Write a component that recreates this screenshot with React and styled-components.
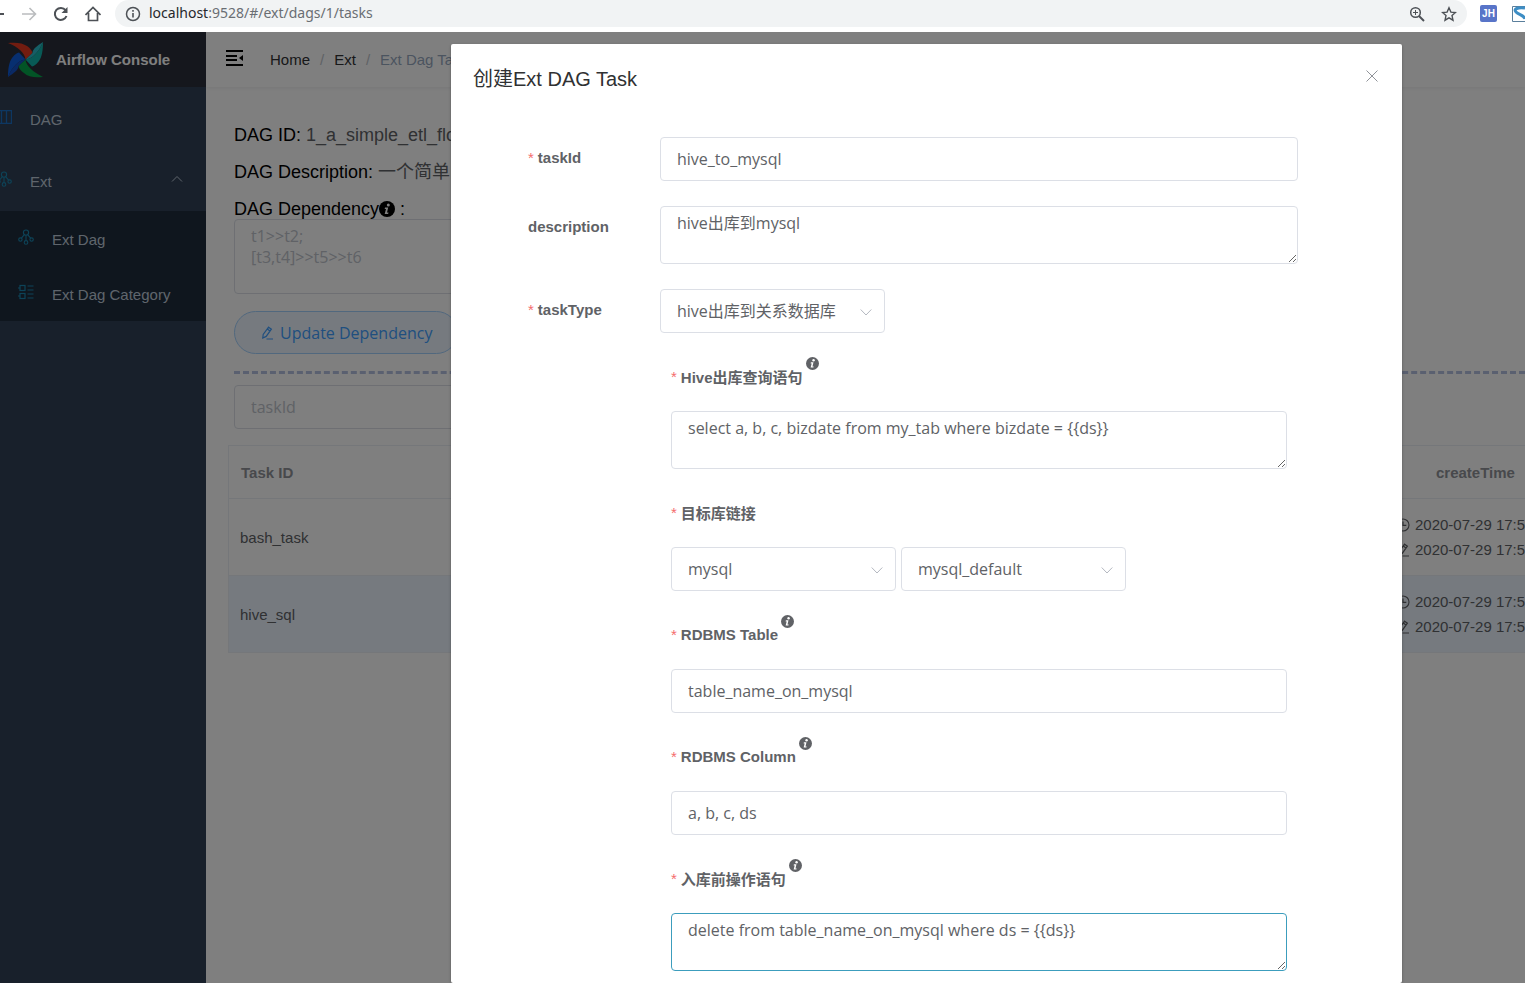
import React from "react";
import styled, { createGlobalStyle, css } from "styled-components";

const ui = `"Liberation Sans", "Noto Sans CJK SC", sans-serif`;
const field = `"Open Sans", "Noto Sans CJK SC", sans-serif`;

const GlobalStyle = createGlobalStyle`
  *, *::before, *::after { box-sizing: border-box; }
  body { margin: 0; font-family: ${ui}; font-size: 15px; color: #606266; }
  button, input, select, textarea { font: inherit; color: inherit; }
  a { color: inherit; text-decoration: none; }
`;

const Page = styled.div`
  display: flex;
  flex-direction: column;
  height: 100vh;
  overflow: hidden;
  background: #fff;
`;

/* browser toolbar */
const Toolbar = styled.div`
  display: flex;
  align-items: center;
  height: 32px;
  padding-bottom: 5px;
  flex: none;
  overflow: hidden;
`;
const IconButton = styled.button`
  display: flex;
  align-items: center;
  justify-content: center;
  width: 32px;
  height: 27px;
  padding: 0;
  border: 0;
  background: none;
  color: #4d5156;
  flex: none;
`;
const NavButtons = styled.div`
  display: flex;
  margin-left: -19px;
  margin-right: 6px;
`;
const Address = styled.div`
  flex: 1;
  display: flex;
  align-items: center;
  height: 27px;
  padding: 0 2px 0 10px;
  gap: 8px;
  background: #f1f3f4;
  border-radius: 14px;
  color: #4d5156;
`;
const Url = styled.div`
  flex: 1;
  padding-bottom: 2px;
  font: 14px/20px "Noto Sans", sans-serif;
  color: #6a6e73;
  span { color: #26282b; }
`;
const AddressActions = styled.div`
  display: flex;
`;
const Extensions = styled.div`
  display: flex;
  align-items: center;
  gap: 15px;
  width: 58px;
  padding-left: 13px;
  overflow: hidden;
  flex: none;
  svg { flex: none; }
`;
const Badge = styled.span`
  width: 17px;
  height: 17px;
  flex: none;
  border-radius: 2px;
  background: #5874c8;
  color: #fff;
  font: bold 10px/17px ${ui};
  text-align: center;
`;

/* console */
const Shell = styled.div`
  position: relative;
  flex: 1;
  display: flex;
  min-height: 0;
  overflow: hidden;
`;
const Sidebar = styled.aside`
  width: 206px;
  flex: none;
  background: #304156;
  color: #bfcbd9;
`;
const Brand = styled.a`
  display: flex;
  align-items: center;
  gap: 12px;
  height: 55px;
  padding-left: 7px;
  background: #2b2f3a;
  color: #fff;
  font-weight: bold;
`;
const Menu = styled.nav`
  display: flex;
  flex-direction: column;
`;
const MenuLink = styled.a`
  display: flex;
  align-items: center;
  gap: 18px;
  height: ${(p) => (p.$nested ? 55 : 62)}px;
  padding: 2px 23px 0 ${(p) => (p.$nested ? 18 : 0)}px;
  background: ${(p) => (p.$nested ? "#1f2d3d" : "transparent")};
  svg { flex: none; margin-bottom: 5px; }
  span { flex: 1; white-space: nowrap; }
`;
const MenuIcon = styled.i`
  display: flex;
  justify-content: flex-end;
  width: ${(p) => (p.$nested ? 16 : 12)}px;
  color: ${(p) => (p.$blue ? "#1a6fc4" : "#1a86b0")};
`;
const Main = styled.main`
  flex: 1;
  min-width: 0;
  overflow: hidden;
`;
const Navbar = styled.header`
  display: flex;
  align-items: center;
  gap: 26px;
  height: 55px;
  padding-left: 19px;
  box-shadow: 0 1px 4px rgba(0, 21, 41, 0.08);
  svg { margin-bottom: 3px; }
`;
const Crumbs = styled.nav`
  display: flex;
  gap: 10px;
  color: #303133;
  white-space: nowrap;
  i { font-style: normal; color: #c0c4cc; }
  span { color: #97a8be; }
`;
const Content = styled.section`
  padding: 38px 0 0 28px;
`;
const Facts = styled.div`
  display: flex;
  flex-direction: column;
  gap: 17px;
`;
const Fact = styled.div`
  height: 20px;
  font-size: 18px;
  line-height: 20px;
  color: #000;
  white-space: nowrap;
  span { color: #606266; }
  svg { vertical-align: -2px; margin-right: 5px; }
`;
const control = css`
  display: block;
  width: 100%;
  border: 1px solid ${(p) => (p.$active ? "#3c9dbd" : "#dcdfe6")};
  border-radius: 4px;
  background: #fff;
  font-family: ${field};
  font-size: 16px;
  outline: none;
  &::placeholder { color: #c0c4cc; }
`;
const TextInput = styled.input`
  ${control}
  height: 44px;
  padding: 0 16px;
  max-width: ${(p) => (p.$short ? "320px" : "none")};
`;
const TextArea = styled.textarea`
  ${control}
  height: ${(p) => (p.$tall ? 75 : 58)}px;
  max-width: ${(p) => (p.$tall ? "640px" : "none")};
  padding: 6px 16px;
  line-height: 21px;
  resize: vertical;
  overflow: hidden;
`;
const PillButton = styled.button`
  display: flex;
  align-items: center;
  gap: 6px;
  height: 43px;
  margin: 17px 0;
  padding: 0 25px;
  border: 1px solid #a3d0fd;
  border-radius: 22px;
  background: #ecf5ff;
  color: #409eff;
  font-family: ${field};
  font-size: 16px;
`;
const Divider = styled.hr`
  height: 0;
  margin: 0 0 11px;
  border: 0;
  border-top: 3px dashed #b4c0e0;
`;
const Table = styled.table`
  width: calc(100% + 43px);
  margin: 16px 0 0 -6px;
  table-layout: fixed;
  border-collapse: collapse;
  border-left: 1px solid #ebeef5;
  th, td { padding: 0 12px; text-align: left; border-bottom: 1px solid #ebeef5; }
  th { height: 53px; border-top: 1px solid #ebeef5; color: #909399; }
  td { height: 77px; padding-left: 11px; line-height: 25px; }
  th:last-child { width: 172px; padding-left: 46px; }
  td:last-child { padding-left: 6px; }
  td svg { vertical-align: -2px; margin-right: 5px; }
`;
const Row = styled.tr`
  background: ${(p) => (p.$current ? "#ecf5ff" : "transparent")};
`;

/* dialog */
const Overlay = styled.div`
  position: absolute;
  inset: 0;
  padding: 12px 123px 0 451px;
  background: rgba(0, 0, 0, 0.5);
  overflow: hidden;
`;
const Dialog = styled.section`
  min-height: 100%;
  background: #fff;
  border-radius: 2px;
  box-shadow: 0 1px 3px rgba(0, 0, 0, 0.3);
`;
const DialogHeader = styled.header`
  display: flex;
  align-items: center;
  justify-content: space-between;
  height: 65px;
  padding: 4px 22px 0;
  h2 { margin: 0; font-size: 20px; font-weight: normal; line-height: 26px; color: #303133; }
`;
const CloseButton = styled.button`
  display: flex;
  padding: 0 1px 6px;
  border: 0;
  background: none;
  color: #909399;
`;
const Form = styled.form`
  display: flex;
  flex-direction: column;
  gap: 25px;
  padding: 28px 104px 0 77px;
`;
const FormRow = styled.div`
  display: flex;
`;
const Label = styled.label`
  display: flex;
  align-items: center;
  width: ${(p) => (p.$stacked ? "auto" : "132px")};
  height: 44px;
  padding-bottom: 3px;
  flex: none;
  color: #606266;
  font-weight: bold;
  &::before {
    content: ${(p) => (p.$required ? '"*"' : "none")};
    margin-right: 4px;
    color: #f56c6c;
    font-weight: normal;
  }
  svg { margin: 0 0 27px 3px; }
`;
const Cell = styled.div`
  flex: 1;
`;
const Nested = styled.div`
  display: flex;
  flex-direction: column;
  gap: 23px;
  padding: 23px 11px 0;
`;
const Stack = styled.div`
  display: flex;
  flex-direction: column;
  gap: 11px;
`;
const SelectGroup = styled.div`
  display: flex;
  gap: 5px;
`;
const SelectBox = styled.div`
  position: relative;
  width: 225px;
  select { ${control} height: 44px; padding: 0 30px 0 16px; appearance: none; }
  svg { position: absolute; right: 13px; top: 17px; color: #b4b8c0; pointer-events: none; }
`;

const Svg = ({ size = 16, box = 16, sw = 1, children, w }) => (
  <svg width={w || size} height={size} viewBox={`0 0 ${w || box} ${box}`} fill="none" stroke="currentColor" strokeWidth={sw} aria-hidden="true">
    {children}
  </svg>
);
const Chevron = ({ up }) => (
  <Svg size={12} box={12}><path d={up ? "M1 8.500 6 3.500l5 5" : "M0.700 3.500l5.300 5.500 5.300-5.500"} /></Svg>
);
const Info = ({ size = 13 }) => (
  <svg width={size} height={size} viewBox="0 0 16 16" aria-hidden="true">
    <circle cx="8" cy="8" r="8" fill="currentColor" />
    <circle cx="9.300" cy="3.900" r="1.500" fill="#fff" />
    <path d="M6 6.600h3.200L8 11.600h1.500l-.4 1.400H5.700L7 7.900H5.700z" fill="#fff" />
  </svg>
);
const Pencil = () => (
  <Svg size={14} box={14} sw={1.2}>
    <path d="M8.600 1.200l2.800 2-5.200 7.200-3.400 1.600.4-3.600zM7.300 3l2.700 2M6.500 13H13" />
  </Svg>
);
const Clock = () => (
  <Svg size={14} box={14} sw={1.1}><circle cx="7" cy="7" r="6" /><path d="M7 3.500V7.400h3.300" /></Svg>
);
const Nodes = () => (
  <Svg sw={1.1}>
    <circle cx="8" cy="3.600" r="2.600" /><circle cx="8" cy="13.400" r="1.800" />
    <circle cx="2.400" cy="10.600" r="1.700" /><circle cx="13.600" cy="10.600" r="1.700" />
    <path d="M8 6.200v5.400M6.400 5.700L3.400 9.200M9.600 5.700l3 3.500" />
  </Svg>
);
const ListIcon = () => (
  <Svg sw={1.2}><rect x="2" y="1.500" width="5" height="5" /><rect x="2" y="9.500" width="5" height="5" /><path d="M0 4h2M0 12h2M9.500 2h6M9.500 6h6M9.500 10h6M9.500 14h6" /></Svg>
);
const Columns = () => (
  <Svg size={14} w={12} box={14}><path d="M0 .500h11.500v13H0M1.500 .500v13M6.500 .500v13" strokeWidth="1.300" /></Svg>
);
const Pinwheel = () => (
  <svg width="37" height="37" viewBox="0 0 37 37" aria-hidden="true">
    <path d="M1 2C9 1 16 2 20 5c4 3 5 5 5.500 7L18.500 18.500C18 12 11 6 1 2z" fill="#e43921" />
    <path d="M36 1c0 8-1 15-4 19-3 4-5 5-7 5.500L18.500 18.500C25 18 32 11 36 1z" fill="#11b5ac" />
    <path d="M36 36c-8 1-15 0-19-4-4-3-5-5-5.500-7L18.500 18.500C19 25 26 31 36 36z" fill="#04a84c" />
    <path d="M1 36c0-8 1-15 4-19 3-4 5-5 7-5.500L18.500 18.500C12 19 5 26 1 36z" fill="#0f5ee0" />
    <path d="M36 1C30 5 25.500 8 25.500 12L18.500 18.500C25 18 32 11 36 1z" fill="#2bbccb" />
    <path d="M1 36c6-4 10.500-7 10.500-11L18.500 18.500C12 19 5 26 1 36z" fill="#1552c8" />
  </svg>
);
const Hamburger = () => (
  <svg width="19" height="18" viewBox="0 0 19 18" aria-hidden="true">
    <path d="M1 2h17M1 7h11M1 11h11M1 16h17" stroke="#000" strokeWidth="2" />
    <path d="M18 6v6l-4-3z" fill="#000" />
  </svg>
);

const Field = ({ id, label, info, required = true, stacked = true, children }) => {
  const Wrap = stacked ? Stack : FormRow;
  return (
    <Wrap>
      <Label htmlFor={id} $required={required} $stacked={stacked}>
        {label}{info && <Info />}
      </Label>
      {stacked ? children : <Cell>{children}</Cell>}
    </Wrap>
  );
};
const Select = ({ id, value, label }) => (
  <SelectBox>
    <select id={id} aria-label={label} defaultValue={value}><option>{value}</option></select>
    <Chevron />
  </SelectBox>
);

const tasks = [
  { id: "bash_task", time: "2020-07-29 17:5" },
  { id: "hive_sql", time: "2020-07-29 17:5", current: true },
];

export default function App() {
  return (
    <Page>
      <GlobalStyle />
      <Toolbar>
        <NavButtons>
          <IconButton aria-label="Back"><Svg><path d="M15 8H2M8 2L2 8l6 6" strokeWidth="2" /></Svg></IconButton>
          <IconButton aria-label="Forward"><Svg><path d="M1 8h13M8.500 2l6 6-6 6" stroke="#babcbe" strokeWidth="1.600" /></Svg></IconButton>
          <IconButton aria-label="Reload"><Svg><path d="M13.500 10A6 6 0 1 1 12.600 4.200" strokeWidth="2" /><path d="M14.500 1v6h-6z" fill="currentColor" stroke="none" /></Svg></IconButton>
          <IconButton aria-label="Home"><Svg><path d="M.500 9L8 1.500 15.500 9M3.500 7v7.500h9V7" strokeWidth="1.700" /></Svg></IconButton>
        </NavButtons>
        <Address>
          <Svg><circle cx="8" cy="8" r="6.500" strokeWidth="1.500" /><path d="M8 7v4.500M8 4v1.700" strokeWidth="1.600" /></Svg>
          <Url><span>localhost</span>:9528/#/ext/dags/1/tasks</Url>
          <AddressActions>
            <IconButton aria-label="Zoom"><Svg><circle cx="6.500" cy="6.500" r="4.800" strokeWidth="1.500" /><path d="M10 10l5 5" strokeWidth="2" /><path d="M4 6.500h5M6.500 4v5" /></Svg></IconButton>
            <IconButton aria-label="Bookmark"><Svg><path d="M8 1.800l1.900 4.300 4.600.4-3.500 3.100 1 4.600L8 11.800l-4 2.400 1-4.600L1.500 6.500l4.600-.4z" strokeWidth="1.400" /></Svg></IconButton>
          </AddressActions>
        </Address>
        <Extensions>
          <Badge>JH</Badge>
          <svg width="20" height="16" viewBox="0 0 20 16" fill="none" aria-hidden="true">
            <path d="M20 .500H.500v15H20" stroke="#5a7f9c" />
            <path d="M13 2C6 1 1 3 4 6s8 3 9 7" stroke="#3d8dc4" strokeWidth="3" />
          </svg>
        </Extensions>
      </Toolbar>

      <Shell>
        <Sidebar>
          <Brand href="#/"><Pinwheel />Airflow Console</Brand>
          <Menu>
            <MenuLink href="#/dag"><MenuIcon $blue><Columns /></MenuIcon><span>DAG</span></MenuLink>
            <MenuLink href="#/ext"><MenuIcon><Nodes /></MenuIcon><span>Ext</span><Chevron up /></MenuLink>
            <MenuLink $nested href="#/ext/dags"><MenuIcon $nested><Nodes /></MenuIcon><span>Ext Dag</span></MenuLink>
            <MenuLink $nested href="#/ext/category"><MenuIcon $nested><ListIcon /></MenuIcon><span>Ext Dag Category</span></MenuLink>
          </Menu>
        </Sidebar>
        <Main>
          <Navbar>
            <Hamburger />
            <Crumbs><a href="#/">Home</a><i>/</i><a href="#/ext">Ext</a><i>/</i><span>Ext Dag Tasks</span></Crumbs>
          </Navbar>
          <Content>
            <Facts>
              <Fact>DAG ID: <span>1_a_simple_etl_flow</span></Fact>
              <Fact>DAG Description: <span>一个简单的</span></Fact>
              <Fact as="label" htmlFor="dependency">DAG Dependency<Info size={16} />:</Fact>
            </Facts>
            <TextArea id="dependency" $tall placeholder={"t1>>t2;\n[t3,t4]>>t5>>t6"} />
            <PillButton><Pencil />Update Dependency</PillButton>
            <Divider />
            <TextInput $short placeholder="taskId" aria-label="taskId" />
            <Table>
              <thead><tr><th>Task ID</th><th>createTime</th></tr></thead>
              <tbody>
                {tasks.map((t) => (
                  <Row key={t.id} $current={t.current}>
                    <td>{t.id}</td>
                    <td><Clock />{t.time}<br /><Pencil />{t.time}</td>
                  </Row>
                ))}
              </tbody>
            </Table>
          </Content>
        </Main>

        <Overlay>
          <Dialog role="dialog" aria-labelledby="dialog-title">
            <DialogHeader>
              <h2 id="dialog-title">创建Ext DAG Task</h2>
              <CloseButton aria-label="Close"><Svg size={14} box={14}><path d="M1.500 1.500l11 11M12.500 1.500L1.500 12.500" /></Svg></CloseButton>
            </DialogHeader>
            <Form>
              <Field id="taskId" label="taskId" stacked={false}><TextInput id="taskId" defaultValue="hive_to_mysql" /></Field>
              <Field id="description" label="description" required={false} stacked={false}><TextArea id="description" defaultValue="hive出库到mysql" /></Field>
              <FormRow>
                <Label htmlFor="taskType" $required>taskType</Label>
                <Cell>
                  <Select id="taskType" value="hive出库到关系数据库" />
                  <Nested>
                    <Field id="query" label="Hive出库查询语句" info><TextArea id="query" defaultValue="select a, b, c, bizdate from my_tab where bizdate = {{ds}}" /></Field>
                    <Field id="conn" label="目标库链接">
                      <SelectGroup><Select id="conn" value="mysql" /><Select id="connId" label="connection" value="mysql_default" /></SelectGroup>
                    </Field>
                    <Field id="table" label="RDBMS Table" info><TextInput id="table" defaultValue="table_name_on_mysql" /></Field>
                    <Field id="column" label="RDBMS Column" info><TextInput id="column" defaultValue="a, b, c, ds" /></Field>
                    <Field id="pre" label="入库前操作语句" info><TextArea id="pre" $active defaultValue="delete from table_name_on_mysql where ds = {{ds}}" /></Field>
                  </Nested>
                </Cell>
              </FormRow>
            </Form>
          </Dialog>
        </Overlay>
      </Shell>
    </Page>
  );
}
